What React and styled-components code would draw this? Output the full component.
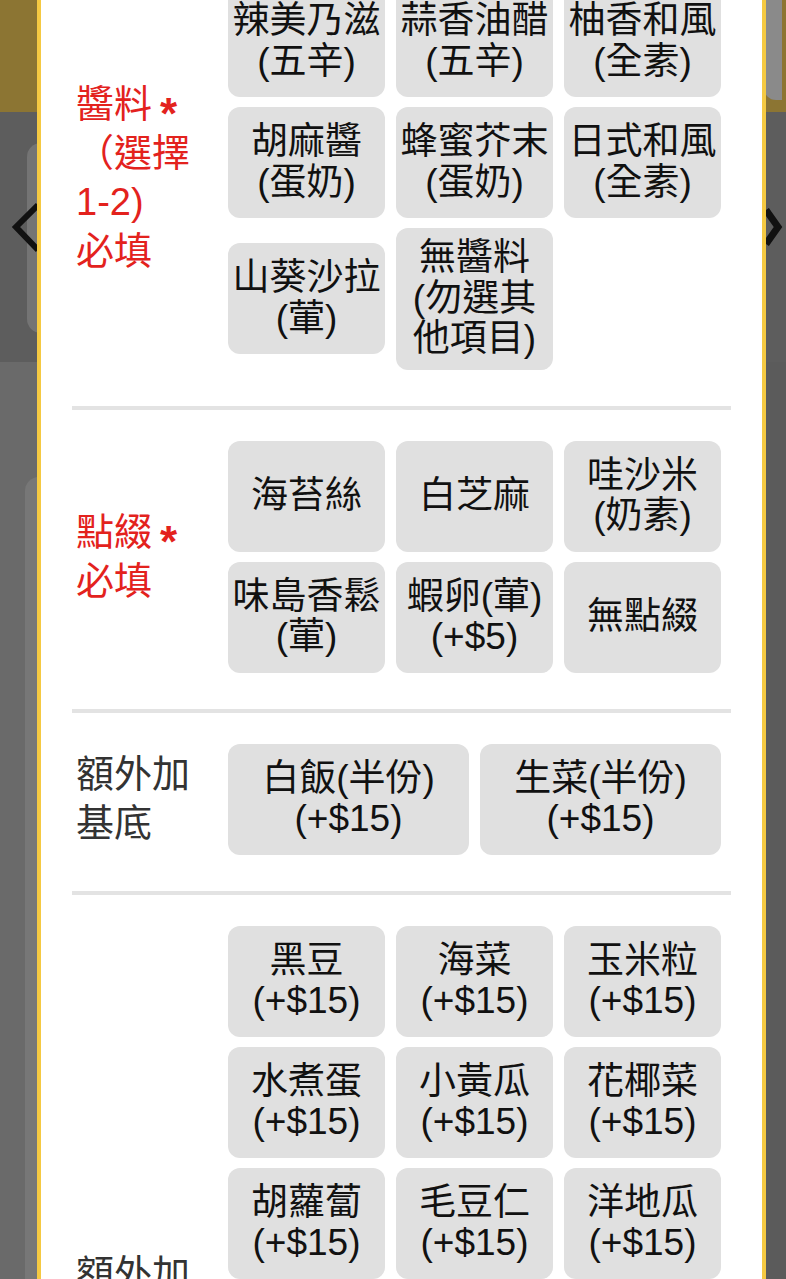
import React from 'react';
import styled, { createGlobalStyle } from 'styled-components';

const Global = createGlobalStyle`
  html, body { margin: 0; padding: 0; }
  body {
    width: 786px;
    height: 1279px;
    overflow: hidden;
    font-family: "Liberation Sans", "Noto Sans CJK TC", sans-serif;
  }
`;

/* ---------- dimmed page behind the modal ---------- */
const Page = styled.div`
  width: 786px;
  height: 1279px;
  display: flex;
  flex-direction: column;
  position: relative;
  overflow: hidden;
  background: #5c5c5c;
`;

const Header = styled.div`
  height: 112px;
  flex: none;
  background: #8c7533;
  display: flex;
  justify-content: flex-end;
`;

const HeaderTab = styled.div`
  width: 18px;
  height: 100px;
  margin-right: 4px;
  background: #8a8a8a;
  border-radius: 0 0 0 12px;
`;

const Band = styled.div`
  height: 250px;
  flex: none;
  box-sizing: border-box;
  padding-top: 31px;
  background: #5d5d5d;
  position: relative;
`;

const BandCard = styled.div`
  margin-left: 27px;
  width: 140px;
  height: 190px;
  background: #747474;
  border-radius: 14px;
`;

const Chevron = styled.svg`
  position: absolute;
  top: ${p => p.$top}px;
  left: ${p => p.$left}px;
`;

const Lower = styled.div`
  flex: 1;
  display: flex;
  justify-content: space-between;
`;

const LowerLeft = styled.div`
  width: 60px;
  box-sizing: border-box;
  padding-top: 115px;
  background: #6a6a6a;
  display: flex;
`;

const LowerCard = styled.div`
  margin-left: 25px;
  flex: 1;
  background: #777777;
  border-radius: 14px 0 0 0;
`;

const LowerRight = styled.div`
  width: 40px;
  background: #5b5b5b;
`;

/* ---------- modal ---------- */
const Modal = styled.div`
  position: fixed;
  top: 0;
  bottom: 0;
  left: 37px;
  width: 729px;
  box-sizing: border-box;
  background: #ffffff;
  border-left: 4px solid #f5c942;
  border-right: 4px solid #f5c942;
  overflow: hidden;
`;

const Body = styled.div`
  margin-top: -45px;
  padding: 0 31px;
`;

const Section = styled.section`
  display: flex;
  align-items: center;
  padding: 31px 0 36px;
  border-bottom: 4px solid #e3e3e3;
`;

const Label = styled.div`
  width: 156px;
  flex: none;
  box-sizing: border-box;
  padding-left: 4px;
  font-size: 38px;
  line-height: 49px;
  color: ${p => (p.$required ? '#e3221d' : '#333333')};
  white-space: nowrap;
`;

const LabelLine = styled.div`
  height: 49px;
`;

const Star = styled.span`
  margin-left: 8px;
  font-family: "Liberation Sans", sans-serif;
  font-size: 44px;
  font-weight: 700;
  line-height: 0;
  vertical-align: -12px;
`;

const Options = styled.div`
  width: 493px;
  flex: none;
  display: grid;
  grid-template-columns: repeat(${p => p.$cols}, 1fr);
  column-gap: 11px;
  row-gap: 10px;
  align-items: center;
`;

const OptionButton = styled.button`
  min-height: 111px;
  box-sizing: border-box;
  padding: 10px 4px;
  border: none;
  border-radius: 12px;
  background: #e0e0e0;
  color: #111111;
  font-family: inherit;
  font-size: 37px;
  line-height: 40.5px;
  text-align: center;
  display: flex;
  flex-direction: column;
  align-items: center;
  justify-content: center;
  white-space: nowrap;
`;

const OptionLine = styled.span`
  display: block;
`;

const sections = [
  {
    label: [['醬料', true], ['（選擇'], ['1-2)'], ['必填']],
    required: true,
    cols: 3,
    items: [
      ['辣美乃滋', '(五辛)'],
      ['蒜香油醋', '(五辛)'],
      ['柚香和風', '(全素)'],
      ['胡麻醬', '(蛋奶)'],
      ['蜂蜜芥末', '(蛋奶)'],
      ['日式和風', '(全素)'],
      ['山葵沙拉', '(葷)'],
      ['無醬料', '(勿選其', '他項目)'],
    ],
  },
  {
    label: [['點綴', true], ['必填']],
    required: true,
    cols: 3,
    items: [
      ['海苔絲'],
      ['白芝麻'],
      ['哇沙米', '(奶素)'],
      ['味島香鬆', '(葷)'],
      ['蝦卵(葷)', '(+$5)'],
      ['無點綴'],
    ],
  },
  {
    label: [['額外加'], ['基底']],
    required: false,
    cols: 2,
    items: [
      ['白飯(半份)', '(+$15)'],
      ['生菜(半份)', '(+$15)'],
    ],
  },
  {
    label: [['額外加'], ['配料']],
    required: false,
    cols: 3,
    items: [
      ['黑豆', '(+$15)'],
      ['海菜', '(+$15)'],
      ['玉米粒', '(+$15)'],
      ['水煮蛋', '(+$15)'],
      ['小黃瓜', '(+$15)'],
      ['花椰菜', '(+$15)'],
      ['胡蘿蔔', '(+$15)'],
      ['毛豆仁', '(+$15)'],
      ['洋地瓜', '(+$15)'],
      ['紫洋蔥', '(+$15)'],
      ['溏心蛋', '(+$15)'],
      ['板豆腐', '(+$15)'],
      ['鷹嘴豆', '(+$15)'],
      ['南瓜', '(+$15)'],
      ['杏鮑菇', '(+$15)'],
      ['舒肥雞胸', '(半份)', '(+$30)'],
      ['酪梨', '(+$25)'],
      ['鮭魚', '(+$40)'],
    ],
  },
];

export default function App() {
  return (
    <>
      <Global />
      <Page>
        <Header>
          <HeaderTab />
        </Header>
        <Band>
          <BandCard />
          <Chevron $left={8} $top={86} width="32" height="60" viewBox="0 0 32 60">
            <polyline points="30,7 8,29 30,52" fill="none" stroke="#111" strokeWidth="6" strokeLinejoin="miter" />
          </Chevron>
          <Chevron $left={762} $top={92} width="24" height="46" viewBox="0 0 24 46">
            <polyline points="4,6 16,23 4,40" fill="none" stroke="#111" strokeWidth="7" strokeLinejoin="miter" />
          </Chevron>
        </Band>
        <Lower>
          <LowerLeft>
            <LowerCard />
          </LowerLeft>
          <LowerRight />
        </Lower>
      </Page>
      <Modal>
        <Body>
          {sections.map((s, i) => (
            <Section key={i}>
              <Label $required={s.required}>
                {s.label.map(([text, star], j) => (
                  <LabelLine key={j}>
                    {text}
                    {star && <Star>*</Star>}
                  </LabelLine>
                ))}
              </Label>
              <Options $cols={s.cols}>
                {s.items.map((it, k) => (
                  <OptionButton key={k} type="button">
                    {it.map((line, m) => (
                      <OptionLine key={m}>{line}</OptionLine>
                    ))}
                  </OptionButton>
                ))}
              </Options>
            </Section>
          ))}
        </Body>
      </Modal>
    </>
  );
}
